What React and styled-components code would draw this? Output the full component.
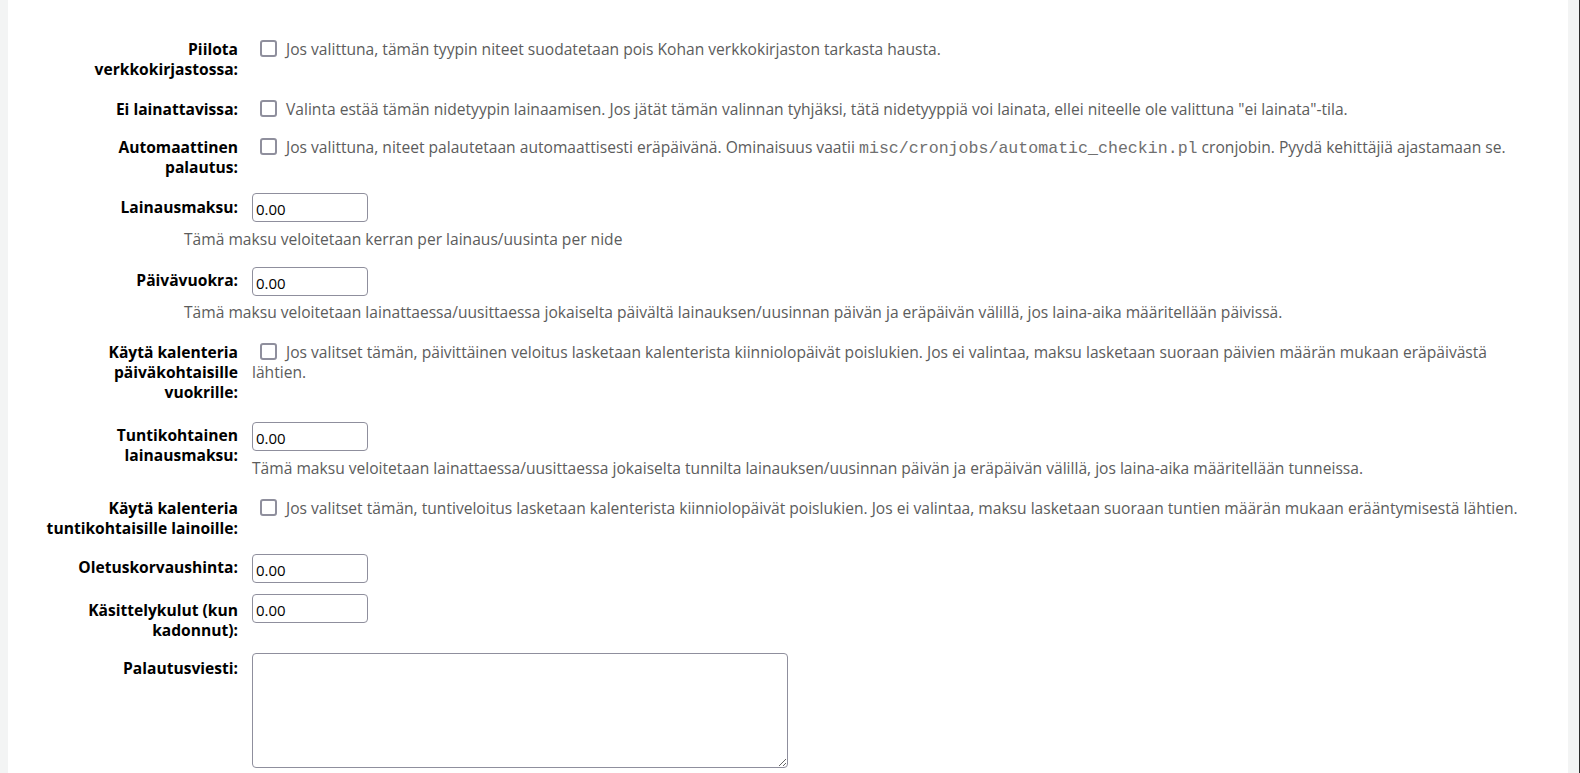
import React from "react";
import styled, { createGlobalStyle } from "styled-components";

const Global = createGlobalStyle`
  html, body { margin: 0; padding: 0; height: 773px; overflow: hidden; }
  body { font-family: "Open Sans", "Liberation Sans", sans-serif; }
  * { box-sizing: border-box; }
`;

const Page = styled.div`
  display: flex;
  height: 773px;
  background: #f3f4f4;
  padding: 0 11px 0 8px;
  border-right: 1px solid #2b2b2b;
`;

const Panel = styled.main`
  flex: 1;
  background: #ffffff;
  padding: 39px 33px 0 0;
`;

const List = styled.ol`
  list-style: none;
  margin: 0;
  padding: 0;
  display: flex;
  flex-direction: column;
`;

const Row = styled.li`
  display: flex;
  align-items: flex-start;
  margin-top: ${(p) => p.$mt || 0}px;
`;

const Label = styled.label`
  flex: 0 0 230px;
  text-align: right;
  font-weight: 700;
  font-size: 15.6px;
  line-height: 20px;
  color: #000;
  padding-top: ${(p) => p.$pt || 0}px;
  span { display: block; white-space: nowrap; }
`;

const Field = styled.div`
  flex: 1;
  margin-left: 14px;
  font-size: 15.6px;
  line-height: 20px;
  color: #5c5c5c;
`;

const Check = styled.input.attrs({ type: "checkbox" })`
  appearance: none;
  -webkit-appearance: none;
  display: inline-block;
  vertical-align: top;
  width: 17px;
  height: 17px;
  margin: 1px 9px 0 8px;
  border: 2px solid #8f8f9d;
  border-radius: 3px;
  background: #fff;
`;

const TextInput = styled.input.attrs({ type: "text" })`
  display: block;
  width: 116px;
  height: 29px;
  padding: 3px 3px 0;
  border: 1px solid #8f8f9d;
  border-radius: 4px;
  font-family: "Open Sans", "Liberation Sans", sans-serif;
  font-size: 15px;
  color: #000;
  background: #fff;
  outline: none;
`;

const Hint = styled.div`
  font-size: 15.6px;
  line-height: 20px;
  color: #5c5c5c;
  margin-top: ${(p) => p.$mt || 0}px;
  padding-left: ${(p) => p.$indent || 0}px;
`;

const Code = styled.code`
  font-family: "Liberation Mono", "DejaVu Sans Mono", monospace;
  font-size: 16.6px;
  color: #707070;
`;

const TextArea = styled.textarea`
  display: block;
  width: 536px;
  height: 115px;
  border: 1px solid #8f8f9d;
  border-radius: 4px;
  background: #fff;
  font-family: "Open Sans", "Liberation Sans", sans-serif;
  font-size: 14px;
  outline: none;
`;

const Lines = ({ lines, pt }) => (
  <Label $pt={pt}>
    {lines.map((l) => (
      <span key={l}>{l}</span>
    ))}
  </Label>
);

export default function App() {
  return (
    <>
      <Global />
      <Page>
        <Panel>
          <List>
            <Row>
              <Lines lines={["Piilota", "verkkokirjastossa:"]} />
              <Field>
                <Check />
                Jos valittuna, tämän tyypin niteet suodatetaan pois Kohan verkkokirjaston tarkasta hausta.
              </Field>
            </Row>
            <Row $mt={20}>
              <Lines lines={["Ei lainattavissa:"]} />
              <Field>
                <Check />
                Valinta estää tämän nidetyypin lainaamisen. Jos jätät tämän valinnan tyhjäksi, tätä nidetyyppiä voi lainata, ellei niteelle ole valittuna "ei lainata"-tila.
              </Field>
            </Row>
            <Row $mt={18}>
              <Lines lines={["Automaattinen", "palautus:"]} />
              <Field>
                <Check />
                Jos valittuna, niteet palautetaan automaattisesti eräpäivänä. Ominaisuus vaatii{" "}
                <Code>misc/cronjobs/automatic_checkin.pl</Code> cronjobin. Pyydä kehittäjiä ajastamaan se.
              </Field>
            </Row>
            <Row $mt={16}>
              <Lines lines={["Lainausmaksu:"]} pt={4} />
              <Field>
                <TextInput defaultValue="0.00" />
              </Field>
            </Row>
            <li>
              <Hint $mt={7} $indent={176}>
                Tämä maksu veloitetaan kerran per lainaus/uusinta per nide
              </Hint>
            </li>
            <Row $mt={18}>
              <Lines lines={["Päivävuokra:"]} pt={3} />
              <Field>
                <TextInput defaultValue="0.00" />
              </Field>
            </Row>
            <li>
              <Hint $mt={6} $indent={176}>
                Tämä maksu veloitetaan lainattaessa/uusittaessa jokaiselta päivältä lainauksen/uusinnan päivän ja eräpäivän välillä, jos laina-aika määritellään päivissä.
              </Hint>
            </li>
            <Row $mt={20}>
              <Lines lines={["Käytä kalenteria", "päiväkohtaisille", "vuokrille:"]} />
              <Field>
                <Check />
                Jos valitset tämän, päivittäinen veloitus lasketaan kalenterista kiinniolopäivät poislukien. Jos ei valintaa, maksu lasketaan suoraan päivien määrän mukaan eräpäivästä lähtien.
              </Field>
            </Row>
            <Row $mt={20}>
              <Lines lines={["Tuntikohtainen", "lainausmaksu:"]} pt={3} />
              <Field>
                <TextInput defaultValue="0.00" />
                <Hint $mt={7}>
                  Tämä maksu veloitetaan lainattaessa/uusittaessa jokaiselta tunnilta lainauksen/uusinnan päivän ja eräpäivän välillä, jos laina-aika määritellään tunneissa.
                </Hint>
              </Field>
            </Row>
            <Row $mt={20}>
              <Lines lines={["Käytä kalenteria", "tuntikohtaisille lainoille:"]} />
              <Field>
                <Check />
                Jos valitset tämän, tuntiveloitus lasketaan kalenterista kiinniolopäivät poislukien. Jos ei valintaa, maksu lasketaan suoraan tuntien määrän mukaan erääntymisestä lähtien.
              </Field>
            </Row>
            <Row $mt={16}>
              <Lines lines={["Oletuskorvaushinta:"]} pt={3} />
              <Field>
                <TextInput defaultValue="0.00" />
              </Field>
            </Row>
            <Row $mt={11}>
              <Lines lines={["Käsittelykulut (kun", "kadonnut):"]} pt={6} />
              <Field>
                <TextInput defaultValue="0.00" />
              </Field>
            </Row>
            <Row $mt={13}>
              <Lines lines={["Palautusviesti:"]} pt={5} />
              <Field>
                <TextArea />
              </Field>
            </Row>
          </List>
        </Panel>
      </Page>
    </>
  );
}
